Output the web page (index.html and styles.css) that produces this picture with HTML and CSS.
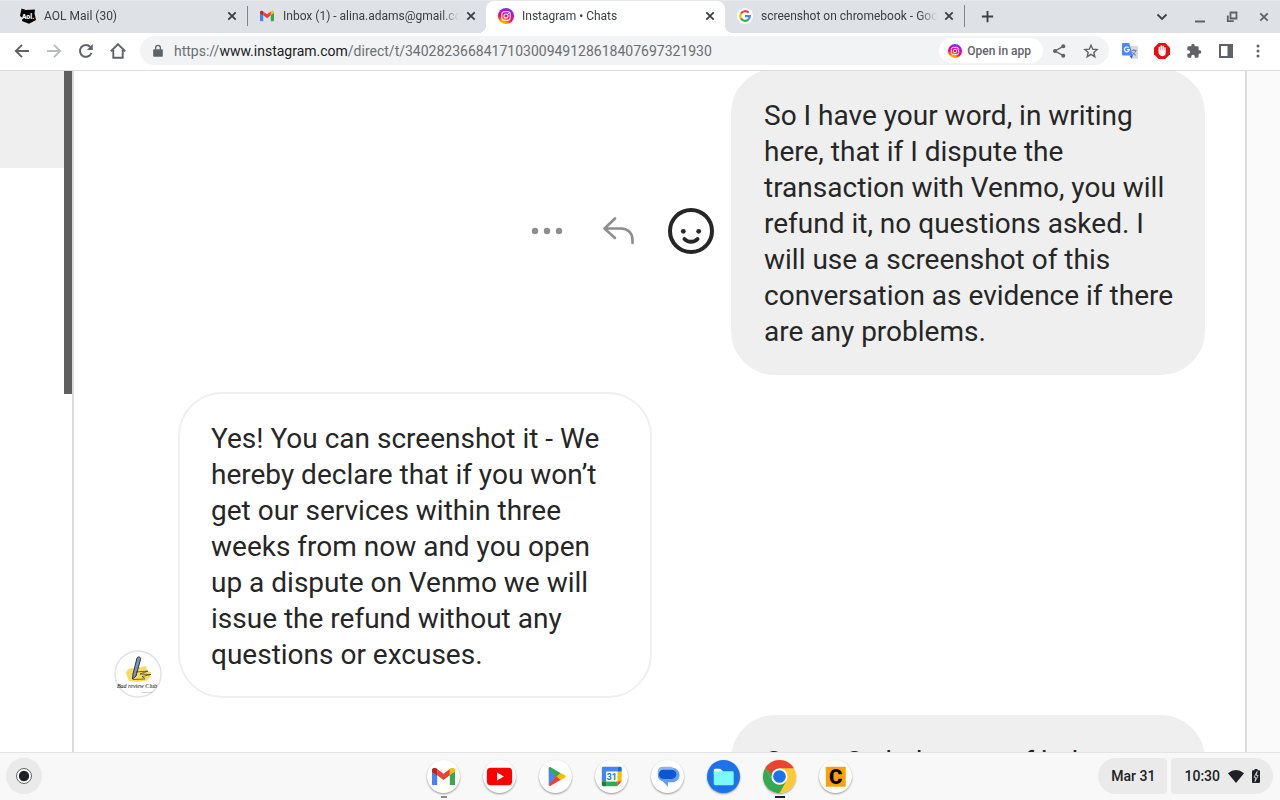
FILE: index.html
```html
<!DOCTYPE html>
<html lang="en">
<head>
    <meta charset="UTF-8">
    <meta name="viewport" content="width=device-width, initial-scale=1.0">
    <title>Instagram • Chats</title>
    <link rel="stylesheet" href="styles.css">
</head>
<body>
    <!-- shared shapes -->
    <svg class="defs" width="0" height="0">
        <defs>
            <radialGradient id="insta" cx="0.3" cy="1.05" r="1.05">
                <stop offset="0" stop-color="#ffd600"/>
                <stop offset="0.3" stop-color="#ff8a00"/>
                <stop offset="0.55" stop-color="#ff0169"/>
                <stop offset="0.8" stop-color="#d300c5"/>
                <stop offset="1" stop-color="#7638fa"/>
            </radialGradient>
            <symbol id="ig" viewBox="0 0 16 16">
                <circle cx="8" cy="8" r="8" fill="url(#insta)"/>
                <g fill="none" stroke="#fff" stroke-width="1.1">
                    <rect x="3.8" y="3.8" width="8.4" height="8.4" rx="2.4"/>
                    <circle cx="8" cy="8" r="2"/>
                </g>
                <circle cx="10.4" cy="5.6" r="0.6" fill="#fff"/>
            </symbol>
            <symbol id="x" viewBox="0 0 16 16">
                <path d="M4.3 4.3l7.4 7.4M11.7 4.3l-7.4 7.4" fill="none" stroke="currentColor" stroke-width="1.8"/>
            </symbol>
            <symbol id="gmail" viewBox="0 0 24 18">
                <path d="M0 3v13.4C0 17.300.7 18 1.600 18H5.500V7.200z" fill="#4285f4"/>
                <path d="M18.500 18h3.900c.9 0 1.600-.7 1.600-1.600V3l-5.500 4.200z" fill="#34a853"/>
                <path d="M18.500 1.200v6L24 3.800V2.500c0-2.200-2.500-3.200-4.200-2.200z" fill="#fbbc04"/>
                <path d="M5.500 7.800V1.200l6.500 4.900 6.500-4.900v6.600L12 12.700z" fill="#ea4335"/>
                <path d="M0 2.500v1.600l5.500 4V1.200L4.200.3C2.500-.7 0 .3 0 2.500z" fill="#c5221f"/>
            </symbol>
        </defs>
    </svg>

    <header class="browser">
        <div class="tabstrip">
            <div class="tabs" role="tablist">
                <div class="tab" role="tab">
                    <svg class="favicon" viewBox="0 0 16 16"><path d="M1.500.500 6 2l9-.5-.5 4L16 12l-7 3.800L2 13l.5-3L0 8z" fill="#000"/><text x="8" y="10.500" class="aol">Aol.</text></svg>
                    <span class="title">AOL Mail (30)</span>
                    <button class="close" aria-label="Close tab"><svg><use href="#x"/></svg></button>
                </div>
                <div class="tab divided" role="tab">
                    <svg class="favicon"><use href="#gmail" x="1" y="2" width="14" height="12"/></svg>
                    <span class="title">Inbox (1) - alina.adams@gmail.com - Gmail</span>
                    <button class="close" aria-label="Close tab"><svg><use href="#x"/></svg></button>
                </div>
                <div class="tab active" role="tab" aria-selected="true">
                    <svg class="favicon"><use href="#ig"/></svg>
                    <span class="title">Instagram • Chats</span>
                    <button class="close" aria-label="Close tab"><svg><use href="#x"/></svg></button>
                </div>
                <div class="tab" role="tab">
                    <svg class="favicon" viewBox="0 0 16 16">
                        <circle cx="8" cy="8" r="8" fill="#fff"/>
                        <g fill="none" stroke-width="2.200">
                            <path d="M11.600 4.700A4.800 4.800 0 0 0 3.900 5.700" stroke="#ea4335"/>
                            <path d="M3.900 5.600A4.800 4.800 0 0 0 3.900 10.400" stroke="#fbbc05"/>
                            <path d="M3.900 10.300A4.800 4.800 0 0 0 11.300 11.600" stroke="#34a853"/>
                            <path d="M11.200 11.700A4.800 4.800 0 0 0 12.800 8.100H8" stroke="#4285f4"/>
                        </g>
                    </svg>
                    <span class="title">screenshot on chromebook - Google Search</span>
                    <button class="close" aria-label="Close tab"><svg><use href="#x"/></svg></button>
                </div>
            </div>
            <button class="newtab" aria-label="New tab"><svg viewBox="0 0 16 16"><path d="M8 2v12M2 8h12" fill="none" stroke="currentColor" stroke-width="2"/></svg></button>
            <div class="window">
                <button aria-label="Search tabs"><svg viewBox="0 0 16 16"><path d="M3.500 5.500 8 10l4.500-4.500" fill="none" stroke="currentColor" stroke-width="1.800"/></svg></button>
                <button aria-label="Minimize"><svg viewBox="0 0 16 16"><path d="M3 12.500h10" stroke="currentColor" stroke-width="2"/></svg></button>
                <button aria-label="Restore"><svg viewBox="0 0 16 16"><path d="M6.500 3.500h6v6h-6zM3.800 6.500v5.700h6" fill="none" stroke="currentColor" stroke-width="1.800"/></svg></button>
                <button aria-label="Close"><svg><use href="#x"/></svg></button>
            </div>
        </div>

        <div class="toolbar">
            <div class="nav">
                <button aria-label="Back"><svg viewBox="0 0 16 16"><path d="M15 8H2M8 1.800 1.800 8 8 14.200" fill="none" stroke="currentColor" stroke-width="1.900"/></svg></button>
                <button aria-label="Forward" disabled><svg viewBox="0 0 16 16"><path d="M1 8h13M8 1.800 14.200 8 8 14.200" fill="none" stroke="currentColor" stroke-width="1.900"/></svg></button>
                <button aria-label="Reload"><svg viewBox="0 0 16 16"><path d="M13.400 10A5.900 5.900 0 1 1 12.300 4" fill="none" stroke="currentColor" stroke-width="2"/><path d="M14.800 1v6H8.800z" fill="currentColor"/></svg></button>
                <button aria-label="Home"><svg viewBox="0 0 16 16"><path d="M.8 8.300 8 1.400l7.200 6.900M3.300 7v7.800h9.400V7" fill="none" stroke="currentColor" stroke-width="1.900"/></svg></button>
            </div>
            <div class="omnibox">
                <svg class="lock" viewBox="0 0 16 16"><path d="M3.500 6h9a1 1 0 0 1 1 1v6.500a1 1 0 0 1-1 1h-9a1 1 0 0 1-1-1V7a1 1 0 0 1 1-1z" fill="currentColor"/><path d="M5.300 6.500V4.300a2.700 2.700 0 0 1 5.400 0v2.200" fill="none" stroke="currentColor" stroke-width="1.500"/></svg>
                <div class="url" role="textbox" contenteditable="true" spellcheck="false" aria-label="Address">https://<b>www.instagram.com</b>/direct/t/340282366841710300949128618407697321930</div>
                <button class="open"><svg><use href="#ig"/></svg>Open in app</button>
                <button aria-label="Share"><svg viewBox="0 0 16 16"><path d="M12.300 3.300 4 8l8.300 4.700" fill="none" stroke="currentColor" stroke-width="1.400"/><g fill="currentColor"><circle cx="12.300" cy="3.300" r="2"/><circle cx="4" cy="8" r="2"/><circle cx="12.300" cy="12.700" r="2"/></g></svg></button>
                <button aria-label="Bookmark"><svg viewBox="0 0 16 16"><path d="M8 2.200 9.700 6.200l4.400.4-3.300 2.900 1 4.200L8 11.400l-3.800 2.300 1-4.200L1.900 6.600l4.400-.4z" fill="none" stroke="currentColor" stroke-width="1.400"/></svg></button>
            </div>
            <div class="extensions">
                <button aria-label="Translate"><svg viewBox="0 0 16 16"><path d="M6 3h9.200a.8.8 0 0 1 .8.8V15a.8.8 0 0 1-.8.8H9.500z" fill="#d5d9de"/><path d="M9.500 7.500h5M12 6v1.500M13.700 7.500c-.5 2.200-2 4-3.700 5M10.500 9c.8 1.500 2 2.700 3.500 3.500" fill="none" stroke="#6b8299"/><path d="M.8 0h6.400l3.600 12.500H.8A.8.8 0 0 1 0 11.700V.8A.8.8 0 0 1 .8 0z" fill="#4a8af4"/><path d="M7.500 12.500h3.300L9.500 15.800z" fill="#2a56c6"/><path d="M6.600 4.800A2.400 2.400 0 1 0 7.200 6.700H4.900" fill="none" stroke="#fff" stroke-width="1.200"/></svg></button>
                <button aria-label="AdBlock"><svg viewBox="0 0 16 16"><path d="M4.700 0h6.600L16 4.700v6.600L11.300 16H4.700L0 11.300V4.700z" fill="#e60f0f"/><path d="M5.300 8V4.600M7.200 7.500V3M9.100 7.500V3.300M11 8.500V5" stroke="#fff" stroke-width="1.500" stroke-linecap="round"/><path d="M4.600 7.200h7.100v2.600c0 2-1.300 3.400-3.400 3.400-2 0-3.700-1.500-3.700-3.600z" fill="#fff"/></svg></button>
                <button aria-label="Extensions"><svg viewBox="0 0 24 24"><path d="M20.500 11H19V7a2 2 0 0 0-2-2h-4V3.500a2.500 2.500 0 0 0-5 0V5H4a2 2 0 0 0-2 2v3.800h1.500a2.700 2.700 0 0 1 0 5.400H2V20a2 2 0 0 0 2 2h3.800v-1.500a2.700 2.700 0 0 1 5.400 0V22H17a2 2 0 0 0 2-2v-4h1.500a2.500 2.500 0 0 0 0-5z" fill="currentColor"/></svg></button>
                <button aria-label="Side panel"><svg viewBox="0 0 16 16"><path d="M2 2h12v12H2z" fill="none" stroke="currentColor" stroke-width="2"/><path d="M9.500 2H14v12H9.500z" fill="currentColor"/></svg></button>
                <button aria-label="Menu"><svg viewBox="0 0 16 16"><g fill="currentColor"><circle cx="8" cy="3" r="1.500"/><circle cx="8" cy="8" r="1.500"/><circle cx="8" cy="13" r="1.500"/></g></svg></button>
            </div>
        </div>
    </header>

    <main class="page">
        <aside class="chats">
            <div class="selected"></div>
            <div class="scrollbar"></div>
        </aside>
        <section class="thread">
            <div class="row sent">
                <div class="actions">
                    <button aria-label="More"><svg viewBox="0 0 46 46"><g fill="#8e8e8e"><circle cx="11" cy="23" r="3.200"/><circle cx="23" cy="23" r="3.200"/><circle cx="35" cy="23" r="3.200"/></g></svg></button>
                    <button aria-label="Reply"><svg viewBox="0 0 46 46"><path d="M19 10.500 8.500 20.500 19 30M8.500 20.500H25c7 0 11.500 4.500 11.500 11.500v3" fill="none" stroke="#8e8e8e" stroke-width="2.600" stroke-linecap="round" stroke-linejoin="round"/></svg></button>
                    <button aria-label="React"><svg viewBox="0 0 46 46"><circle cx="23" cy="23" r="21" fill="none" stroke="#262626" stroke-width="4"/><circle cx="15.300" cy="23.300" r="2.400" fill="#262626"/><circle cx="30.700" cy="23.300" r="2.400" fill="#262626"/><path d="M16.500 31c3.500 3.800 9.500 3.800 13 0" fill="none" stroke="#262626" stroke-width="4" stroke-linecap="round"/></svg></button>
                </div>
                <p class="bubble">So I have your word, in writing here, that if I dispute the transaction with Venmo, you will refund it, no questions asked. I will use a screenshot of this conversation as evidence if there are any problems.</p>
            </div>
            <div class="row received">
                <svg class="avatar" viewBox="0 0 48 48">
                    <circle cx="24" cy="24" r="23" fill="#fff" stroke="#e2e2e2" stroke-width="1.500"/>
                    <path d="M14 19l7-1 11-2 1 5 4 1-1 4 1 1-5 4-9 1-8-1-2-5-1-3z" fill="#f8dd5c"/>
                    <path d="M23 8c1.500-2 4-1 3.500 1.500L22 26l-3.500 3 .5-5z" fill="#7d91bd" stroke="#2d3344"/>
                    <path d="M19 29.500l12-.5M22 22l12-1-8 3 11 .5-9 2 3 2" fill="none" stroke="#333" stroke-width="0.7"/>
                    <text x="23" y="37.500" class="club">Bad review Club</text>
                    <text x="33" y="42.500" class="tiny">ESSAY.COM</text>
                </svg>
                <p class="bubble">Yes! You can screenshot it - We hereby declare that if you won’t get our services within three weeks from now and you open up a dispute on Venmo we will issue the refund without any questions or excuses.</p>
            </div>
            <div class="row sent">
                <p class="bubble">Great. So help a proof below</p>
            </div>
        </section>
        <div class="margin"></div>
    </main>

    <footer class="shelf">
        <button class="launcher" aria-label="Launcher"><svg viewBox="0 0 36 36"><circle cx="18" cy="18" r="7.500" fill="#fff" stroke="#5f6368" stroke-width="1"/><circle cx="18" cy="18" r="5.200" fill="#202124"/></svg></button>
        <nav class="apps">
            <button class="app idle" aria-label="Gmail"><svg viewBox="0 0 34 34"><use href="#gmail" x="5" y="8" width="24" height="18"/></svg></button>
            <button class="app" aria-label="YouTube"><svg viewBox="0 0 34 34"><rect x="4" y="8" width="26" height="18" rx="4" fill="#f00"/><path d="M14.500 13v8l7-4z" fill="#fff"/></svg></button>
            <button class="app" aria-label="Play Store"><svg viewBox="0 0 34 34"><path d="M10 8v18l8-9z" fill="#4285f4"/><path d="M10 8.500c0-1 1-1.500 2-1l11 6.300-5 4.200-8-9z" fill="#34a853"/><path d="M10 25.500c0 1 1 1.500 2 1l11-6.300-5-4z" fill="#ea4335"/><path d="M22.500 13.500 27 16q1.500 1 0 2l-4.500 2.500L18 17z" fill="#fbbc04"/></svg></button>
            <button class="app" aria-label="Calendar"><svg viewBox="0 0 34 34"><path d="M7 8.500A1.500 1.500 0 0 1 8.500 7H23v5H12v10H7z" fill="#4285f4"/><path d="M23 7h3a1.500 1.500 0 0 1 1.500 1.500V12H23z" fill="#1967d2"/><path d="M23 12h4.500v10H23z" fill="#fbbc04"/><path d="M11.500 22H23v5H11.500z" fill="#34a853"/><path d="M7 22h4.500v5h-3A1.500 1.500 0 0 1 7 25.500z" fill="#188038"/><path d="M23 22h4.500L23 27z" fill="#ea4335"/><path d="M11.500 12H23v10H11.500z" fill="#fff"/><text x="17.300" y="20.500" class="day">31</text></svg></button>
            <button class="app" aria-label="Messages"><svg viewBox="0 0 34 34"><path d="M13 8h9a6 6 0 0 1 0 15H17.500v4.500L12 22c-3-1-5-3-5-6 0-4 2-8 6-8z" fill="#669df6"/><rect x="7" y="7" width="17" height="9" rx="4.500" fill="#8ab4f8"/><rect x="8" y="10" width="18" height="9.500" rx="4.750" fill="#0b57d0"/></svg></button>
            <button class="app files" aria-label="Files"><svg viewBox="0 0 34 34"><path d="M7 10.500A1.500 1.500 0 0 1 8.500 9h5l2.500 2v3H7z" fill="#fff"/><rect x="7" y="11.500" width="20.500" height="14.500" rx="1.500" fill="#7df9fb"/></svg></button>
            <button class="app running" aria-label="Chrome"><svg viewBox="0 0 34 34"><circle cx="17" cy="17" r="17" fill="#fbc934"/><path d="M2.300 8.500 9.600 21.200A8.500 8.500 0 0 0 24.400 21.200L17 34A17 17 0 0 1 2.300 8.500z" fill="#34a853"/><path d="M2.300 8.500H17L9.600 21.200z" fill="#34a853"/><path d="M2.300 8.500A17 17 0 0 1 31.700 8.500H17a8.500 8.500 0 0 0-8 5.500z" fill="#ea4335"/><circle cx="17" cy="17" r="8.300" fill="#fff"/><circle cx="17" cy="17" r="6.500" fill="#1a73e8"/></svg></button>
            <button class="app" aria-label="Crosh"><svg viewBox="0 0 34 34"><rect x="7" y="7" width="20.500" height="20.500" fill="#ffa000"/><text x="17.200" y="24.500" class="letter">C</text></svg></button>
        </nav>
        <div class="status">
            <button class="date">Mar 31</button>
            <button class="tray">10:30
                <svg viewBox="0 0 16 16"><path d="M0 5.300Q8-1.200 16 5.300L8 15z" fill="currentColor"/></svg>
                <svg class="battery" viewBox="0 0 8 14"><path d="M2.500 0h3v1.200H7a1 1 0 0 1 1 1V13a1 1 0 0 1-1 1H1a1 1 0 0 1-1-1V2.200a1 1 0 0 1 1-1h1.500z" fill="currentColor"/><path d="M5 2.500 2 8.300h1.800L3 12.500l3.200-6H4.400z" fill="none" stroke="#eaeaea" stroke-width="0.800"/></svg>
            </button>
        </div>
    </footer>
</body>
</html>
```

FILE: styles.css
```css
*{
    box-sizing: border-box;
}
body{
    margin: 0;
    height: 100vh;
    display: flex;
    flex-direction: column;
    overflow: hidden;
    font-family: Roboto, "Liberation Sans", sans-serif;
    color: #202124;
    background-color: white;
}
button{
    display: flex;
    align-items: center;
    justify-content: center;
    padding: 0;
    border: none;
    background: none;
    color: inherit;
    font: inherit;
    cursor: pointer;
}
svg{
    display: block;
    width: 16px;
    height: 16px;
    flex-shrink: 0;
}
.defs{
    position: absolute;
    width: 0;
    height: 0;
}

/* tab strip */
.browser{
    border-bottom: 1px solid #dadce0;
}
.tabstrip{
    display: flex;
    height: 33px;
    padding: 0 8px;
    background-color: #dee1e6;
    border-top: 1px solid #e6e8ec;
}
.tabs{
    display: flex;
    flex: 0 1 957px;
    min-width: 0;
    border-right: 1px solid #80868b;
    border-image: linear-gradient(transparent 5px, #80868b 5px, #80868b 25px, transparent 25px) 1;
}
.tab{
    position: relative;
    display: flex;
    align-items: center;
    gap: 8px;
    flex: 1 1 0;
    min-width: 0;
    padding: 0 7px 2px 12px;
    font-size: 12px;
    color: #3c4043;
}
.divided::before{
    content: "";
    position: absolute;
    left: 0;
    top: 5px;
    width: 1px;
    height: 20px;
    background-color: #80868b;
}
.active{
    background-color: white;
    border-radius: 8px 8px 0 0;
}
.active::before, .active::after{
    content: "";
    position: absolute;
    bottom: 0;
    width: 8px;
    height: 8px;
}
.active::before{
    left: -8px;
    background: radial-gradient(circle at 0 0, transparent 8px, white 8px);
}
.active::after{
    right: -8px;
    background: radial-gradient(circle at 100% 0, transparent 8px, white 8px);
}
.title{
    flex: 1;
    overflow: hidden;
    white-space: nowrap;
    margin-right: -4px;
    -webkit-mask-image: linear-gradient(to right, black 90%, transparent);
    mask-image: linear-gradient(to right, black 90%, transparent);
}
.newtab{
    width: 44px;
    padding-bottom: 2px;
    color: #3c4043;
}
.newtab svg{
    width: 15px;
    height: 15px;
}
.window{
    display: flex;
    gap: 16px;
    margin-left: auto;
    color: #5f6368;
}
.window button:first-child{
    margin-right: 6px;
    color: #3c4043;
}
.aol{
    font-size: 7px;
    font-weight: 900;
    fill: white;
    text-anchor: middle;
}

/* toolbar */
.toolbar{
    display: flex;
    align-items: center;
    height: 37px;
    padding: 0 14px 2px 14px;
    color: #5f6368;
}
.nav, .extensions{
    display: flex;
    gap: 16px;
}
.nav button:disabled{
    color: #babcbe;
}
.omnibox{
    display: flex;
    align-items: center;
    flex: 1;
    min-width: 0;
    height: 29px;
    margin: 0 13px 0 14px;
    padding: 0 10px 0 11px;
    border-radius: 15px;
    background-color: #f1f3f4;
}
.lock{
    width: 14px;
    height: 14px;
    margin-right: 9px;
}
.url{
    flex: 1;
    min-width: 0;
    overflow: hidden;
    white-space: nowrap;
    font-size: 14px;
    color: #6b6f73;
    outline: none;
}
.url b{
    font-weight: normal;
    color: #202124;
}
.omnibox button{
    margin-left: 16px;
}
.omnibox .open{
    height: 25px;
    gap: 5px;
    padding: 0 12px 0 9px;
    margin-right: -8px;
    border-radius: 13px;
    background-color: white;
    font-size: 12px;
    font-weight: 500;
}
.open svg{
    width: 14px;
    height: 14px;
}

/* page */
.page{
    display: flex;
    flex: 1;
    min-height: 0;
    overflow: hidden;
}
.chats{
    display: flex;
    width: 72px;
}
.selected{
    flex: 1;
    height: 97px;
    background-color: #efefef;
}
.scrollbar{
    width: 8px;
    height: 323px;
    background-color: #5f5f5f;
}
.thread{
    flex: 1;
    min-width: 0;
    margin-top: -2px;
    padding: 0 40px;
    border-left: 2px solid #dbdbdb;
    border-right: 2px solid #dbdbdb;
}
.margin{
    width: 33px;
    background-color: #fafafa;
}
.row{
    display: flex;
    gap: 17px;
    margin-bottom: 17px;
}
.sent{
    justify-content: flex-end;
    align-items: center;
}
.received{
    align-items: flex-end;
}
.bubble{
    width: 474px;
    margin: 0;
    padding: 27px 26px 23px 31px;
    border: 2px solid #efefef;
    border-radius: 44px;
    font-size: 28px;
    line-height: 36px;
    color: #262626;
}
.sent .bubble{
    background-color: #efefef;
}
.actions{
    display: flex;
    gap: 26px;
    padding-top: 18px;
}
.actions svg{
    width: 46px;
    height: 46px;
}
.avatar{
    width: 48px;
    height: 48px;
}
.received{
    gap: 16px;
}
.club{
    font-family: "Liberation Serif", serif;
    font-size: 6px;
    font-style: italic;
    text-anchor: middle;
}
.tiny{
    font-size: 2px;
    fill: #999;
    text-anchor: middle;
}

/* shelf */
.shelf{
    display: grid;
    grid-template-columns: 1fr auto 1fr;
    align-items: center;
    height: 48px;
    padding: 0 7px 1px 6px;
    border-top: 1px solid #e4e4e4;
    background-color: #f8f8f8;
}
.launcher{
    width: 36px;
    height: 36px;
    border-radius: 50%;
    background-color: #eaeaea;
}
.launcher svg{
    width: 36px;
    height: 36px;
}
.apps{
    display: flex;
    gap: 23px;
}
.app{
    position: relative;
    width: 33px;
    height: 33px;
    border-radius: 50%;
    background-color: white;
    box-shadow: 0 1px 2px rgba(0, 0, 0, 0.4);
}
.app svg{
    width: 33px;
    height: 33px;
}
.files{
    background-color: #1a73e8;
}
.idle::after, .running::after{
    content: "";
    position: absolute;
    left: 12px;
    bottom: -5px;
    width: 10px;
    height: 2px;
    background-color: #202124;
}
.idle::after{
    left: 14px;
    width: 6px;
    background-color: #8a8a8a;
}
.day{
    font-size: 9px;
    font-weight: bold;
    fill: #1a73e8;
    text-anchor: middle;
}
.letter{
    font-size: 21px;
    font-weight: 900;
    text-anchor: middle;
}
.status{
    display: flex;
    justify-content: flex-end;
    gap: 4px;
    font-size: 14px;
    font-weight: 500;
}
.status button{
    height: 36px;
    background-color: #eaeaea;
}
.date{
    padding: 0 12px 0 13px;
    border-radius: 18px 4px 4px 18px;
}
.status .tray{
    gap: 8px;
    padding: 0 13px;
    border-radius: 4px 18px 18px 4px;
}
.tray .battery{
    width: 8px;
    height: 14px;
}
```
